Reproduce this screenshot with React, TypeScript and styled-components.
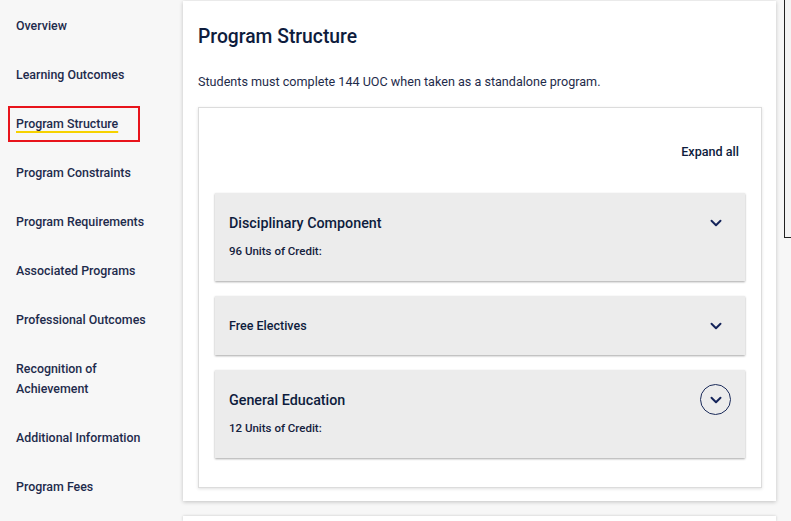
import React from 'react';
import styled, { createGlobalStyle } from 'styled-components';
import { ChevronDown } from 'lucide-react';

const GlobalStyle = createGlobalStyle`
  html, body {
    margin: 0;
    padding: 0;
    background: #f7f7f7;
    overflow: hidden;
  }
  body {
    font-family: Roboto, "Liberation Sans", sans-serif;
    color: #1d2a4a;
  }
`;

type NavEntry = { label: string; active?: boolean };
const navEntries: NavEntry[] = [
  { label: 'Overview' },
  { label: 'Learning Outcomes' },
  { label: 'Program Structure', active: true },
  { label: 'Program Constraints' },
  { label: 'Program Requirements' },
  { label: 'Associated Programs' },
  { label: 'Professional Outcomes' },
  { label: 'Recognition of Achievement' },
  { label: 'Additional Information' },
  { label: 'Program Fees' },
];

type Section = { title: string; credit?: string; big?: boolean; focused?: boolean };
const sections: Section[] = [
  { title: 'Disciplinary Component', credit: '96 Units of Credit:', big: true },
  { title: 'Free Electives' },
  { title: 'General Education', credit: '12 Units of Credit:', big: true, focused: true },
];

const App: React.FC = () => (
  <Page>
    <GlobalStyle />
    <Sidebar>
      {navEntries.map((n) => (
        <NavItem key={n.label} $active={n.active}>
          <NavLabel $active={n.active}>{n.label}</NavLabel>
        </NavItem>
      ))}
    </Sidebar>
    <MainColumn>
      <Card>
        <Title>Program Structure</Title>
        <Intro>Students must complete 144 UOC when taken as a standalone program.</Intro>
        <InnerBox>
          <Toolbar>
            <ExpandAll>Expand all</ExpandAll>
          </Toolbar>
          <AccordionList>
            {sections.map((s) => (
              <AccordionItem key={s.title}>
                <AccordionHeader>
                  <AccordionTitle $big={s.big}>{s.title}</AccordionTitle>
                  <ToggleButton $focused={s.focused}>
                    <ChevronDown size={18} strokeWidth={2.6} />
                  </ToggleButton>
                </AccordionHeader>
                {s.credit ? <Credit>{s.credit}</Credit> : null}
              </AccordionItem>
            ))}
          </AccordionList>
        </InnerBox>
      </Card>
      <NextCard />
    </MainColumn>
    <SidePanel />
  </Page>
);
export default App;

const Page = styled.div`
  display: flex;
  height: 521px;
  overflow: hidden;
`;

const Sidebar = styled.nav`
  width: 183px;
  flex-shrink: 0;
  box-sizing: border-box;
  padding: 10px 8px;
  display: flex;
  flex-direction: column;
  gap: 17px;
`;

const NavItem = styled.div<{ $active?: boolean }>`
  box-sizing: border-box;
  width: ${(p) => (p.$active ? '132px' : '156px')};
  padding: 6px 6px;
  border: 2px solid ${(p) => (p.$active ? '#e8141b' : 'transparent')};
  margin: -2px 0;
  font-size: 12.4px;
  font-weight: 500;
  line-height: 20px;
  color: #1e2b4c;
`;

const NavLabel = styled.span<{ $active?: boolean }>`
  text-decoration: ${(p) => (p.$active ? 'underline' : 'none')};
  text-decoration-color: #f6d200;
  text-decoration-thickness: 2px;
  text-underline-offset: 3px;
`;

const MainColumn = styled.div`
  width: 593px;
  flex-shrink: 0;
  display: flex;
  flex-direction: column;
  gap: 15px;
  padding-top: 1px;
`;

const Card = styled.section`
  background: #fff;
  box-shadow: 0 1px 4px rgba(0, 0, 0, 0.22);
  padding: 23px 14px 13px 15px;
`;

const NextCard = styled.div`
  background: #fff;
  height: 40px;
  box-shadow: 0 0 3px rgba(0, 0, 0, 0.2);
`;

const Title = styled.h2`
  margin: 0;
  font-size: 19.3px;
  line-height: 26px;
  font-weight: 500;
  color: #0e1c3d;
`;

const Intro = styled.p`
  margin: 23px 0 16px;
  font-size: 12.6px;
  line-height: 18px;
  color: #1e2b4a;
`;

const InnerBox = styled.div`
  border: 1px solid #dcdcdc;
  box-shadow: 0 1px 3px rgba(0, 0, 0, 0.12);
  padding: 35px 16px 29px;
`;

const Toolbar = styled.div`
  display: flex;
  justify-content: flex-end;
  padding-right: 6px;
  margin-bottom: 32px;
`;

const ExpandAll = styled.span`
  font-size: 12.6px;
  line-height: 18px;
  font-weight: 500;
  color: #0e1c3d;
`;

const AccordionList = styled.div`
  display: flex;
  flex-direction: column;
  gap: 15px;
`;

const AccordionItem = styled.div`
  background: #ececec;
  box-shadow: 0 1px 2px rgba(0, 0, 0, 0.35);
  padding: 14px 14px 14px 14px;
`;

const AccordionHeader = styled.div`
  display: flex;
  align-items: center;
  justify-content: space-between;
  height: 31px;
`;

const AccordionTitle = styled.span<{ $big?: boolean }>`
  font-size: ${(p) => (p.$big ? '14.3px' : '12.5px')};
  font-weight: 500;
  color: #0e1c3d;
`;

const ToggleButton = styled.span<{ $focused?: boolean }>`
  box-sizing: border-box;
  width: 31px;
  height: 31px;
  border-radius: 50%;
  border: 1px solid ${(p) => (p.$focused ? '#1b2b5a' : 'transparent')};
  display: flex;
  align-items: center;
  justify-content: center;
  color: #14245a;
`;

const Credit = styled.div`
  margin: 5px 0 8px;
  font-size: 11.5px;
  line-height: 16px;
  font-weight: 500;
  color: #14213d;
`;

const SidePanel = styled.div`
  margin-left: 8px;
  flex: 1;
  min-width: 0;
  height: 237px;
  border-left: 1px solid #222;
  border-bottom: 1px solid #222;
  background: #f4f4f4;
`;
